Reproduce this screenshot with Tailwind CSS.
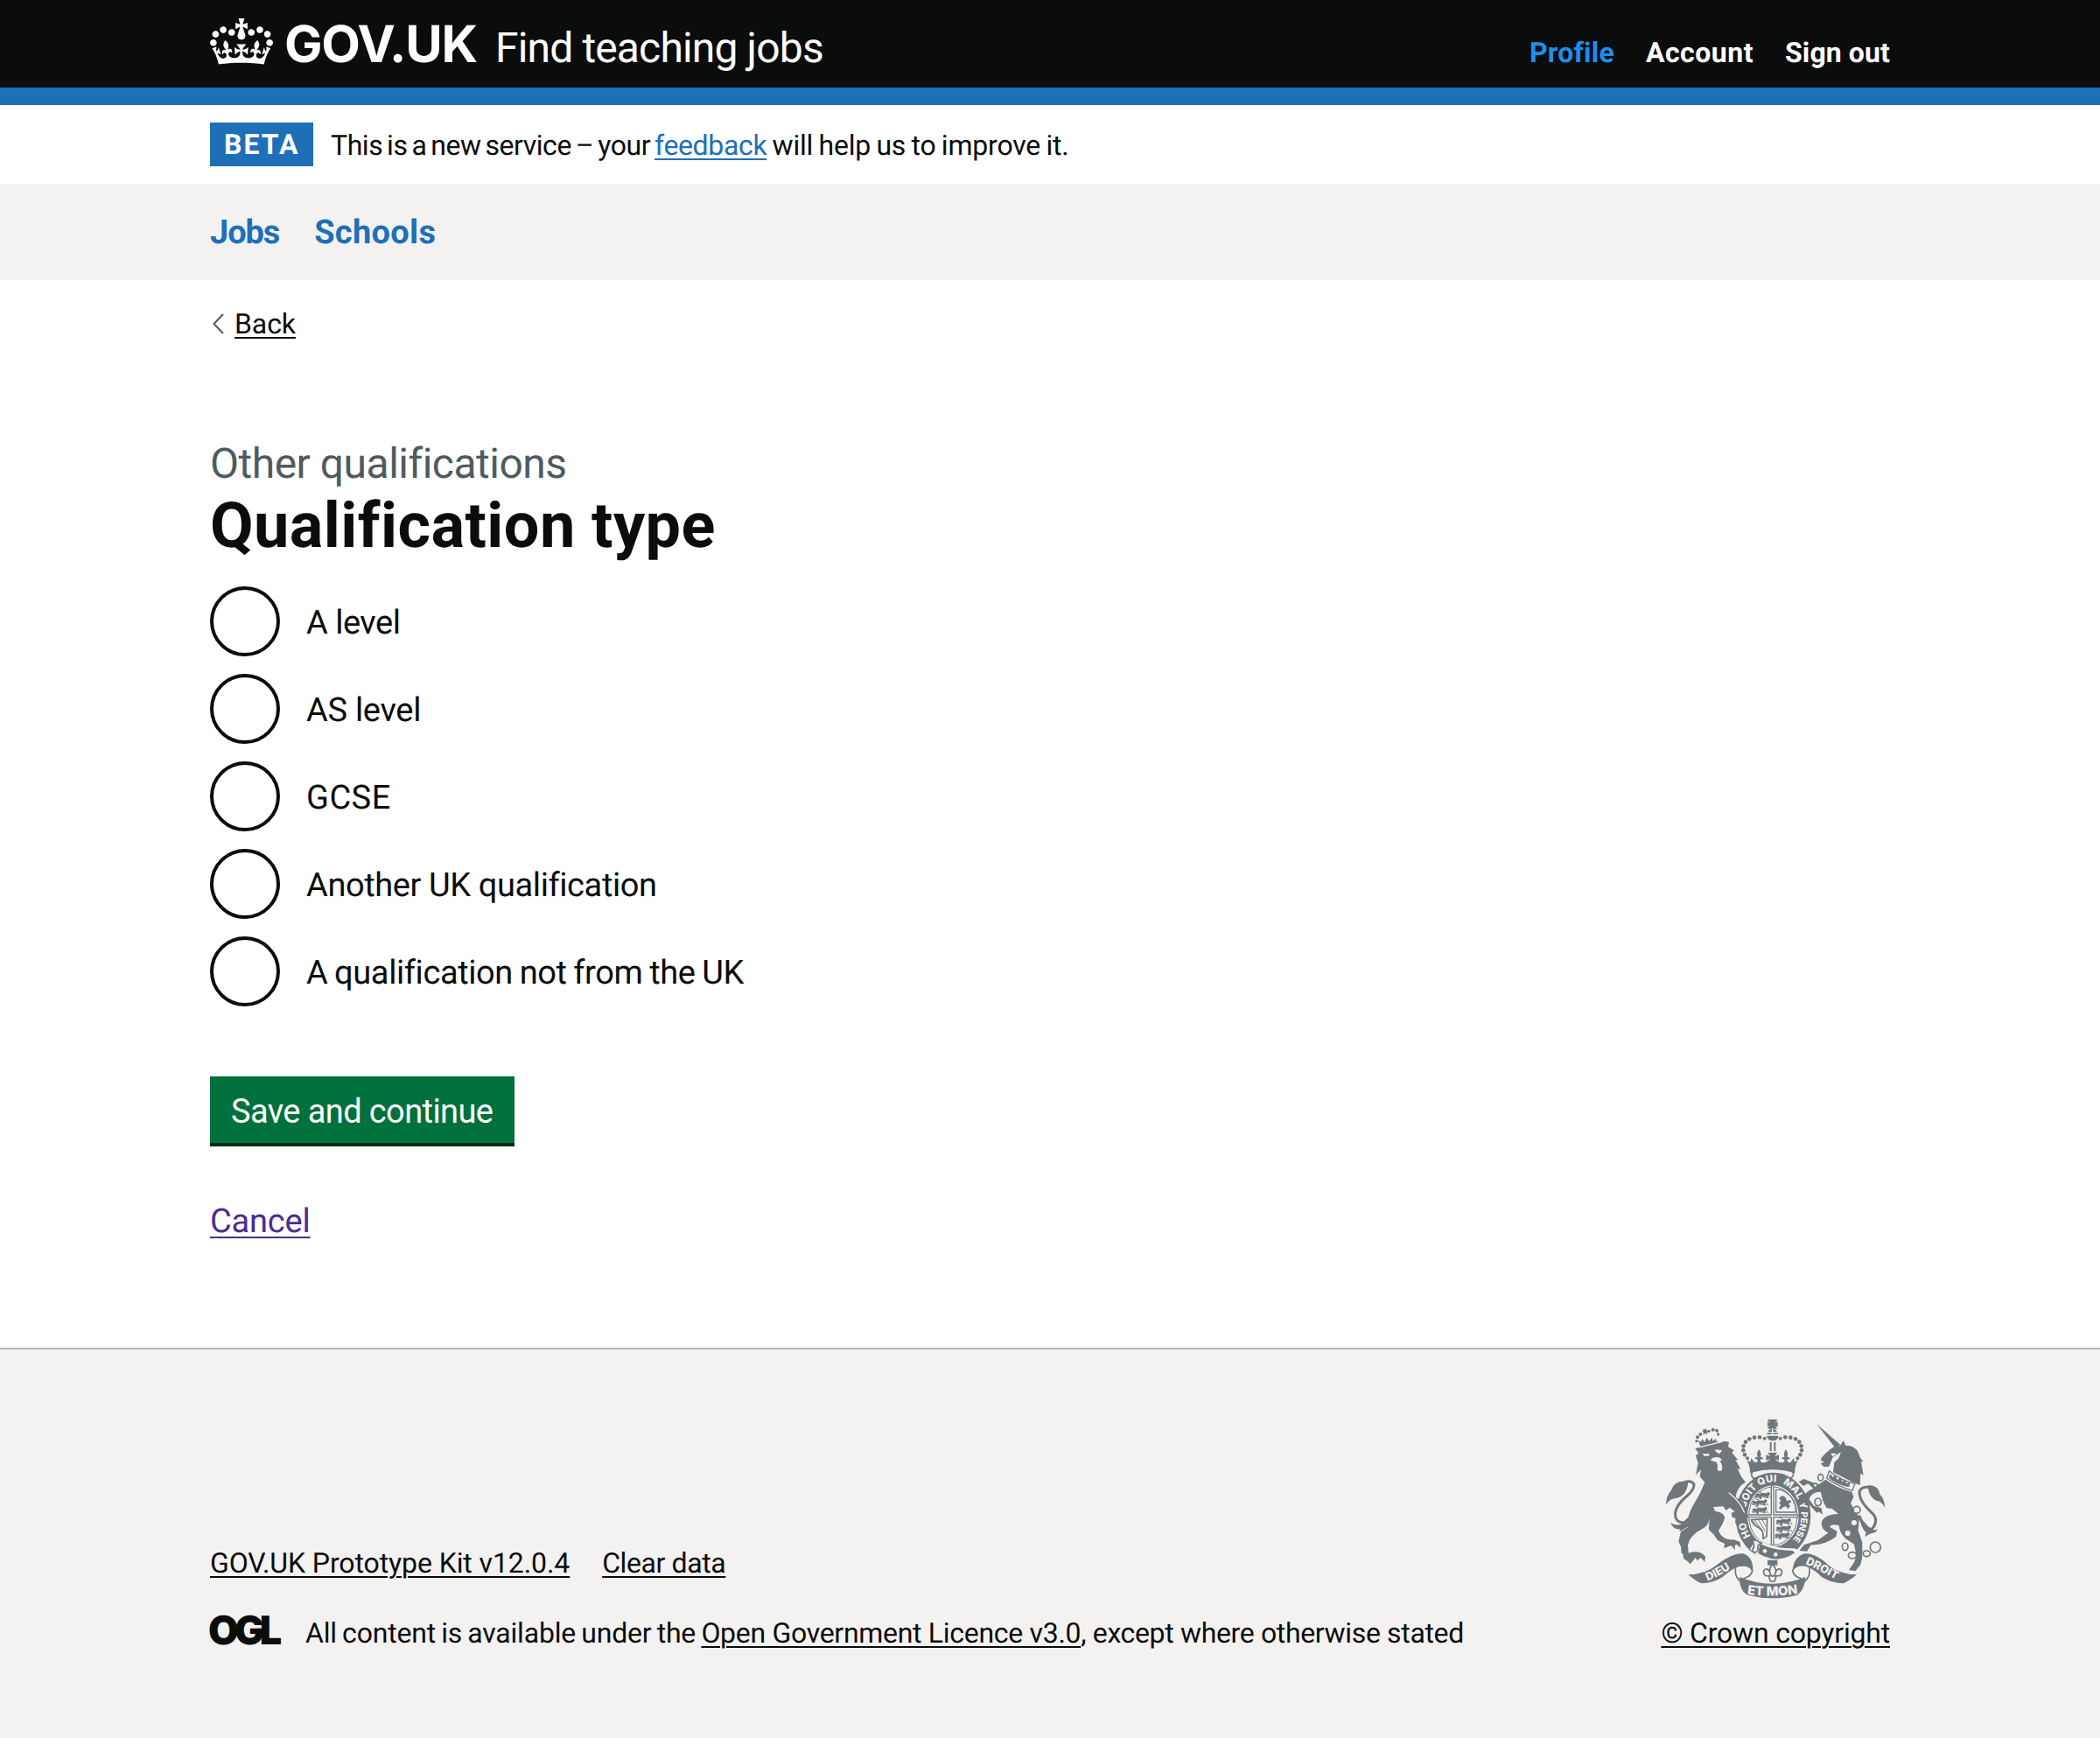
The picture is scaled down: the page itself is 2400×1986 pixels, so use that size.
<!DOCTYPE html>
<html lang="en">
<head>
<meta charset="utf-8">
<title>Qualification type – Find teaching jobs – GOV.UK</title>
<script src="https://cdn.jsdelivr.net/npm/@tailwindcss/browser@4"></script>
</head>
<body class="flex min-h-[1986px] flex-col bg-white font-['Roboto',Arial,sans-serif] text-[32px] leading-[40px] text-[#0b0c0c] [text-rendering:geometricPrecision]">

<header class="border-b-[20px] border-[#1d70b8] bg-[#0b0c0c] text-white">
  <div class="mx-auto flex h-[100px] w-[1920px] justify-between">
    <a href="#" class="flex whitespace-nowrap">
      <svg class="mt-[21px] h-[53px] w-[72px]" viewBox="0 0 132 97" fill="currentColor" aria-hidden="true"><path fill-rule="evenodd" d="M25 30.2c3.5 1.5 7.7-.2 9.1-3.7 1.5-3.6-.2-7.8-3.9-9.2-3.6-1.4-7.6.3-9.1 3.9-1.4 3.5.3 7.5 3.9 9zM9 39.5c3.6 1.5 7.8-.2 9.2-3.7 1.5-3.6-.2-7.8-3.9-9.1-3.6-1.5-7.6.2-9.1 3.8-1.4 3.5.3 7.5 3.8 9zM4.4 57.2c3.5 1.5 7.7-.2 9.1-3.8 1.5-3.6-.2-7.7-3.9-9.1-3.5-1.5-7.6.3-9.1 3.8-1.4 3.5.3 7.6 3.9 9.1zm38.3-21.4c3.5 1.5 7.7-.2 9.1-3.8 1.5-3.6-.2-7.7-3.9-9.1-3.6-1.5-7.6.3-9.1 3.8-1.3 3.6.4 7.7 3.9 9.1zm64.4-5.6c-3.6 1.5-7.8-.2-9.1-3.7-1.5-3.6.2-7.8 3.8-9.2 3.6-1.4 7.7.3 9.2 3.9 1.3 3.5-.4 7.5-3.9 9zm15.9 9.3c-3.6 1.5-7.7-.2-9.1-3.7-1.5-3.6.2-7.8 3.7-9.1 3.6-1.5 7.7.2 9.2 3.8 1.5 3.5-.3 7.5-3.8 9zm4.7 17.7c-3.6 1.5-7.8-.2-9.2-3.8-1.5-3.6.2-7.7 3.9-9.1 3.6-1.5 7.7.3 9.2 3.8 1.3 3.5-.4 7.6-3.9 9.1zM89.3 35.8c-3.6 1.5-7.8-.2-9.2-3.8-1.4-3.6.2-7.7 3.9-9.1 3.6-1.5 7.7.3 9.2 3.8 1.4 3.6-.3 7.7-3.9 9.1zM69.7 17.7l8.9 4.7V9.3l-8.9 2.8c-.2-.3-.5-.6-.9-.9L72.4 0H59.6l3.5 11.2c-.3.3-.6.5-.9.9l-8.8-2.8v13.1l8.8-4.7c.3.3.6.7.9.9l-5 15.4v.1c-.2.8-.4 1.6-.4 2.4 0 4.1 3.1 7.5 7 8.1h.2c.3 0 .7.1 1 .1.4 0 .7 0 1-.1h.2c4-.6 7.1-4.1 7.1-8.1 0-.8-.1-1.7-.4-2.4V34l-5.1-15.4c.4-.2.7-.6 1-.9zM66 92.8c16.9 0 32.8 1.1 47.1 3.2 4-16.9 8.9-26.7 14-33.5l-9.6-3.4c1 4.9 1.1 7.2 0 10.2-1.5-1.4-3-4.3-4.2-8.7L108.6 76c2.8-2 5-3.2 7.5-3.3-4.4 9.4-10 11.9-13.6 11.2-4.3-.8-6.3-4.6-5.6-7.9 1-4.7 5.7-5.9 8-.5 4.3-8.7-3-11.4-7.6-8.8 7.1-7.2 7.9-13.5 2.1-21.1-8 6.1-8.1 12.3-4.5 20.8-4.7-5.4-12.1-2.5-9.5 6.2 3.4-5.2 7.9-2 7.2 3.1-.6 4.3-6.4 7.8-13.5 7.2-10.3-.9-10.9-8-11.2-13.8 2.5-.5 7.1 1.8 11 7.3L80.2 60c-4.1 4.4-8 5.3-12.3 5.4 1.4-4.4 8-11.6 8-11.6H55.5s6.4 7.2 7.9 11.6c-4.2-.1-8-1-12.3-5.4l1.4 16.4c3.9-5.5 8.5-7.7 10.9-7.3-.3 5.8-.9 12.8-11.1 13.8-7.2.6-12.9-2.9-13.5-7.2-.7-5 3.8-8.3 7.1-3.1 2.7-8.7-4.6-11.6-9.4-6.2 3.7-8.5 3.6-14.7-4.6-20.8-5.8 7.6-5 13.9 2.2 21.1-4.7-2.6-11.9.1-7.7 8.8 2.3-5.5 7.1-4.2 8.1.5.7 3.3-1.3 7.1-5.7 7.9-3.5.7-9-1.8-13.5-11.2 2.5.1 4.7 1.3 7.5 3.3l-4.7-15.4c-1.2 4.4-2.7 7.2-4.3 8.7-1.1-3-.9-5.3 0-10.2l-9.5 3.4c5 6.9 9.9 16.7 14 33.5 14.8-2.1 30.8-3.2 47.7-3.2z"/></svg>
      <span class="ml-[13px] flex items-baseline">
        <span class="font-['Inter',sans-serif] text-[58px] leading-[100px] font-bold tracking-[-1.2px]">GOV.UK</span>
        <span class="ml-[21px] text-[48px] tracking-[-0.85px]">Find teaching jobs</span>
      </span>
    </a>
    <nav class="flex gap-[36px] pt-[40px] font-bold">
      <a href="#" class="tracking-[0.2px] text-[#1d8feb]">Profile</a>
      <a href="#" class="tracking-[0.5px]">Account</a>
      <a href="#" class="tracking-[0.1px]">Sign out</a>
    </nav>
  </div>
</header>

<div class="mx-auto flex w-[1920px] items-center py-5">
  <strong class="h-[50px] w-[118px] bg-[#1d70b8] pl-4 leading-[50px] font-bold tracking-[2px] text-white">BETA</strong>
  <p class="ml-5 flex pt-px whitespace-pre"><span class="tracking-[-0.45px] [word-spacing:-2.6px]">This is a new service – your </span><a href="#" class="tracking-[-0.35px] text-[#1d70b8] underline decoration-2 underline-offset-[4px]">feedback</a><span class="tracking-[-0.2px] [word-spacing:-1.4px]"> will help us to improve it.</span></p>
</div>

<nav class="bg-[#f3f2f1]">
  <div class="mx-auto flex h-[110px] w-[1920px] items-center gap-[40px] pt-[2px] text-[38px] font-bold text-[#1d70b8]">
    <a href="#" class="tracking-[-1.1px]">Jobs</a>
    <a href="#" class="tracking-[0.3px]">Schools</a>
  </div>
</nav>

<div class="mx-auto w-[1920px] pt-[30px]">
  <a href="#" class="flex items-center">
    <svg class="mr-[12px] ml-[2px] h-[24px] w-[14px]" viewBox="0 0 14 24" fill="none" stroke="#505a5f" stroke-width="2"><path d="M13 1 2.5 12 13 23"/></svg>
    <span class="tracking-[-0.1px] underline decoration-2 underline-offset-[4px]">Back</span>
  </a>
</div>

<main class="mx-auto flex w-[1920px] flex-col items-start pt-[110px]">
  <span class="text-[48px] leading-[60px] tracking-[-0.5px] text-[#505a5f]">Other qualifications</span>
  <h1 class="pt-px text-[72px] leading-[80px] font-bold tracking-[0.45px]">Qualification type</h1>
  <div class="mt-[29px] flex flex-col gap-5 text-[38px]">
    <label class="flex h-[80px] items-center gap-[30px]"><span class="size-[80px] rounded-full border-4 border-[#0b0c0c]"></span><span class="pt-[4px] tracking-[-0.5px]">A level</span></label>
    <label class="flex h-[80px] items-center gap-[30px]"><span class="size-[80px] rounded-full border-4 border-[#0b0c0c]"></span><span class="pt-[4px] tracking-[-0.3px]">AS level</span></label>
    <label class="flex h-[80px] items-center gap-[30px]"><span class="size-[80px] rounded-full border-4 border-[#0b0c0c]"></span><span class="pt-[4px] tracking-[0.5px]">GCSE</span></label>
    <label class="flex h-[80px] items-center gap-[30px]"><span class="size-[80px] rounded-full border-4 border-[#0b0c0c]"></span><span class="pt-[4px] tracking-[-0.4px]">Another UK qualification</span></label>
    <label class="flex h-[80px] items-center gap-[30px]"><span class="size-[80px] rounded-full border-4 border-[#0b0c0c]"></span><span class="pt-[4px] tracking-[-0.4px] [word-spacing:-1.3px]">A qualification not from the UK</span></label>
  </div>
  <button class="mt-[80px] flex h-[80px] w-[348px] items-center border-b-4 border-[#002d18] bg-[#00703c] px-6 pt-[3px] text-[38px] tracking-[-0.6px] whitespace-nowrap text-white">Save and continue</button>
  <a href="#" class="mt-[61px] text-[38px] leading-[50px] tracking-[-0.2px] text-[#4c2c92] underline decoration-2 underline-offset-[5px]">Cancel</a>
</main>

<footer class="mt-[119px] grow border-t-2 border-[#b1b4b6] bg-[#f3f2f1]">
  <div class="mx-auto flex w-[1920px] items-end justify-between pt-[80px]">
    <div class="flex flex-col gap-[40px]">
      <div class="flex gap-[37px]">
        <a href="#" class="tracking-[-0.1px] underline decoration-2 underline-offset-[4px]">GOV.UK Prototype Kit v12.0.4</a>
        <a href="#" class="tracking-[-0.4px] underline decoration-2 underline-offset-[4px]">Clear data</a>
      </div>
      <div class="flex h-[40px]">
        <span class="-ml-[2px] w-[111px] font-['Inter',sans-serif] text-[45px] leading-[34px] font-black tracking-[-5px]">OGL</span>
        <p class="flex whitespace-pre"><span class="tracking-[-0.2px] [word-spacing:-1.5px]">All content is available under the </span><a href="#" class="tracking-[-0.3px] underline decoration-2 underline-offset-[4px]">Open Government Licence v3.0</a><span class="tracking-[-0.35px]">, except where otherwise stated</span></p>
      </div>
    </div>
    <a href="#" class="flex flex-col items-center gap-5">
      <svg class="h-[204px] w-[250px] overflow-visible" viewBox="72 66 750 612" fill="#6f777b" stroke-linejoin="round" stroke-linecap="round" aria-hidden="true">
        <defs>
          <path id="motto" pathLength="100" d="M439 512A96 116 0 0 1 439 280A96 116 0 0 1 439 512"/>
          <path id="dieu" d="M215 619Q262 601 322 558"/>
          <path id="mon" d="M350 665Q437 677 530 662"/>
          <path id="droit" d="M549 561Q605 586 672 625"/>
          <g id="beast"><path d="M0 6l9-5 5 3 10-4 16 1 7-5 6 5-2 7-6 2 4 6-3 3-8-7-13 1-2 7-8 1 2-8-6-1-6 5-5-2 5-6z"/><path d="M8 16l10-3M30 14l12 2M14 -4l8 2M52 12l4 6" stroke="#6f777b" stroke-width="3"/></g>
        </defs>

        <!-- central crown -->
        <path d="M420 66h34l-8 13 9-7v20l-9-5 7 11h-33l7-11-7 5V72l8 7z"/>
        <path d="M437 98a18 18 0 0 1 18 19h-36a18 18 0 0 1 18-19z"/>
        <path d="M437 98v20M420 110h34" stroke="#f3f2f1" stroke-width="4"/>
        <path d="M417 122h41q-2 17-20 17t-21-17z"/>
        <path d="M428 144h6v31h-6zM442 144h6v31h-6z"/>
        <g id="arch">
          <circle cx="410" cy="131" r="6"/><circle cx="393" cy="127" r="7"/><circle cx="375" cy="128" r="7"/><circle cx="358" cy="133" r="7"/><circle cx="345" cy="143" r="7"/><circle cx="338" cy="157" r="7"/><circle cx="337" cy="172" r="7"/><circle cx="342" cy="187" r="7"/><circle cx="351" cy="199" r="6"/>
        </g>
        <use href="#arch" transform="matrix(-1 0 0 1 874 0)"/>
        <path id="halfband" d="M438 236V180h-17l8 13-14-6v20l13-6q-6 10-20 13-12 0-13-7 3-8 11-5-2-10-11-7 7-11-4-27-11 16-4 27-9-3-11 7 8-3 11 5-2 8-11 7l-12-15-3 13-12-7q12 22 11 45 36-10 77-9z"/>
        <use href="#halfband" transform="matrix(-1 0 0 1 874 0)"/>
        <path d="M370 244q66-17 134 0 12 12-5 25-62-28-126 0-14-12-3-25z" fill="#f3f2f1" stroke="#6f777b" stroke-width="5"/>

        <!-- garter and shield -->
        <ellipse cx="439" cy="397" rx="129" ry="149"/>
        <ellipse cx="439" cy="397" rx="88" ry="105" fill="#f3f2f1"/>
        <ellipse cx="439" cy="397" rx="83" ry="100" fill="none" stroke="#6f777b" stroke-width="3"/>
        <path d="M437 297v198M356 397h166" stroke="#6f777b" stroke-width="12"/>
        <path d="M437 297v198M356 397h166" stroke="#f3f2f1" stroke-width="4"/>
        <use href="#beast" x="376" y="318"/><use href="#beast" x="366" y="343"/><use href="#beast" x="366" y="369"/>
        <use href="#beast" x="448" y="408"/><use href="#beast" x="448" y="432"/><use href="#beast" x="444" y="456"/>
        <path d="M449 307h18q40 16 49 56v21h-67z" fill="none" stroke="#6f777b" stroke-width="4"/>
        <path d="M460 335l10-8 12 6 4 12 12-3 4 8-10 4 6 10-8 9-7-9-9 2-8 8-8-4 8-10-6-8 6-6z"/>
        <path d="M364 410l55-3-2 60-12 8q3-30-14-38-20-8-27-27z" fill="none" stroke="#6f777b" stroke-width="5"/>
        <path d="M377 413l28 40M390 412l20 34M402 410l12 22M370 415l28 32" stroke="#6f777b" stroke-width="3"/>
        <g fill="#f3f2f1" font-family="Inter, sans-serif" font-weight="800" font-size="34">
          <text><textPath href="#motto" startOffset="14">HO</textPath></text>
          <text><textPath href="#motto" startOffset="29">SOIT</textPath></text>
          <text><textPath href="#motto" startOffset="42.5">QUI</textPath></text>
          <text><textPath href="#motto" startOffset="55">MAL</textPath></text>
          <text><textPath href="#motto" startOffset="68">Y</textPath></text>
          <text font-size="31"><textPath href="#motto" startOffset="73">PENSE</textPath></text>
        </g>
        <!-- buckle and strap -->
        <path d="M384 474q50 36 130 34l16 10-30 30h-100l-40-38z" fill="#f3f2f1"/>
        <path d="M394 492q50 24 112 24l8 7q-58 42-126 2z"/>
        <circle cx="411" cy="517" r="7" fill="#f3f2f1"/><circle cx="448" cy="529" r="7" fill="#f3f2f1"/>
        <path d="M369 484q8-8 16-2t16 8q-16 2-14 16t-10 16q-12-4-8-12 10-8 0-26z" fill="#f3f2f1" stroke="#6f777b" stroke-width="5"/>

        <!-- lion -->
        <circle cx="180" cy="127" r="6"/><circle cx="177" cy="140" r="5"/><circle cx="190" cy="117" r="6"/><circle cx="219" cy="106" r="5"/><circle cx="233" cy="101" r="6"/><circle cx="246" cy="104" r="6"/><circle cx="251" cy="117" r="5"/>
        <path d="M199 97l7 4 4-5 1 8 7 1-6 5 3 8-9-4-8 4 3-9-7-5 8-2zM183 137l9 6 4-11 8 12 8-16 8 12 9-12 4 12 9-8 5 12 5-9-4 16-56 16z"/>
        <path d="M172 165q60-12 98-24l18 2-3 17 20 12-7 8 22 26-10-2 18 32-10-1q8 26 27 46-30 16-34 52l28 18q10 28 6 60l-6 12-14-7-16 6 2-18-12-2-3-16 12-4-18-14-12 10-10-14-34 2 6 14q30 4 34 22l-8 22-14 24q14 34 52 30l22 8 2 20-14-12-6 4 1 16-14-16-24 10 2-16-24-12-14-20-16-16 2-42q-2 30-26 40-40 20-48 54l2 28q38-12 58 12l-2 18-14-14-12 10-6-10-18 22-12-12q-14-4-12-22l-6-4-2-22-8-18 8-34 24-14q-4-36 16-72L188 320 205 282 188 262 192 238 174 256 182 216 174 190 184 182z"/>
        <path d="M188 161l76-19" stroke="#f3f2f1" stroke-width="4"/>
        <path d="M196 182q14 4 22 0l4 8-18 2zM238 170q14-2 26 2l-8 12q-10-2-18-14z" fill="#f3f2f1"/>
        <path d="M224 204q14-14 34-6l6 8-8 2q14 18 6 34-10 4-14-4 4-18-6-28-10 2-18-6z" fill="#f3f2f1"/>
        <path d="M288 318q38 28 52 66" stroke="#f3f2f1" stroke-width="4" fill="none"/>
        <path d="M140 420q-40 2-36-36 6-28 38-54 28-24 26-42-10-16-34-6" fill="none" stroke="#6f777b" stroke-width="9"/>
        <path d="M148 280q-46-8-58 28-18 22-18 50 14-22 36-22 36-8 40-56z"/>
        <path d="M88 420q12 10 34 6l34-32q8 28-12 42l-26 14 2-8q-24 2-32-22z"/>

        <!-- unicorn -->
        <path d="M588 81l82 72-16 13z"/>
        <path d="M655 162l14-6 11-18 8 17q34 0 44 26l6 16 10 13-7 1 8 46-10-6-2 40-22-8-70-36 4-34q20-14 22-36-20 18-26 16l-14 34-18 2-10-12 12-6-12-4 2-10q26-30 50-41z"/>
        <path d="M636 184q12-4 22 2l-14 6z" fill="#f3f2f1"/>
        <path d="M632 242q40 34 88 44l-9 24q-50-14-88-42z" fill="#f3f2f1" stroke="#6f777b" stroke-width="4"/>
        <path d="M630 266l6-14 8 12 8-8 8 18 9-10 8 16 8-8 6 14 13-6-4 18q-44-8-70-32z"/>
        <path d="M619 272q40 30 90 42l6 18-10 22 30 48-4 44 14 42v50l-6 26-18 22-22-4 18-26 8-22-8-40-30-20q-20-18-22-44-24-8-32 4l26 16-4 18q-40 30-86 28l-14 22-26-2 16-20 48-16 36-26q-24-8-24-34 6-28 58-30l-22-18-18-2q-18-30-20-56-34 0-40 26l16 22 26 8 4 22-14-10-6 4-24-26-18-6-6-18q4-20 36-34l-18-16-16 8-16-14 18-10 30 12 22 6z"/>
        <path d="M736 398q8 36 40 46 28-30 4-56-50-44-44-78 12-18 38-10" fill="none" stroke="#6f777b" stroke-width="9"/>
        <path d="M764 292q36-4 42 32 16 16 16 44-12-24-30-24-26-12-28-52z"/>
        <path d="M736 400l36 40q16 8 26 2-6 14-22 14l-22 12 4-14q-18-14-22-54z"/>
        <g fill="#f3f2f1" stroke="#6f777b" stroke-width="5">
          <ellipse cx="602" cy="265" rx="9" ry="11"/><circle cx="584" cy="292" r="7"/><ellipse cx="593" cy="349" rx="11" ry="13"/><circle cx="726" cy="376" r="12"/><ellipse cx="686" cy="502" rx="10" ry="13"/><ellipse cx="711" cy="532" rx="14" ry="11"/><ellipse cx="760" cy="526" rx="12" ry="10"/><circle cx="790" cy="504" r="18"/>
        </g>
        <circle cx="717" cy="420" r="9" fill="#f3f2f1"/><circle cx="695" cy="456" r="9" fill="#f3f2f1"/>

        <!-- ribbon -->
        <path d="M310 585q-2-26 30-24 20 4 28 24-4 18-24 24l-18 12q-18-18-16-36z" fill="#f3f2f1" stroke="#6f777b" stroke-width="5"/>
        <path d="M564 585q2-26-30-24-20 4-28 24 4 18 24 24l18 12q18-18 16-36z" fill="#f3f2f1" stroke="#6f777b" stroke-width="5"/>
        <path d="M148 598q60-2 96-32 56-44 94-40 34 12 32 60-16-24-54-14-24 10-50 34-34 22-72 22-18-6-46-30z"/>
        <path d="M726 598q-60-2-96-32-46-44-84-40-38 12-40 60 16-26 54-14 28 14 46 34 34 22 74 22 20-8 46-30z"/>
        <path d="M324 606q110 46 226 0-2 44-28 62-84 22-170 0-28-14-28-62z"/>
        <g fill="#f3f2f1" font-family="Inter, sans-serif" font-weight="800" font-size="38">
          <text><textPath href="#dieu">DIEU</textPath></text>
          <text font-size="44"><textPath href="#mon">ET MON</textPath></text>
          <text><textPath href="#droit">DROIT</textPath></text>
        </g>
        <!-- fleur-de-lis -->
        <path d="M420 548h34v18h-34z"/>
        <path d="M437 562q18 18 8 36 6-24 20-18 10 10-2 22h-50q-12-12-2-22 14-6 20 18-10-18 6-36zM424 603h26l-6 18h-14z" fill="#f3f2f1" stroke="#6f777b" stroke-width="5"/>
      </svg>
      <span class="tracking-[-0.2px] underline decoration-2 underline-offset-[4px]">© Crown copyright</span>
    </a>
  </div>
</footer>
</body>
</html>
